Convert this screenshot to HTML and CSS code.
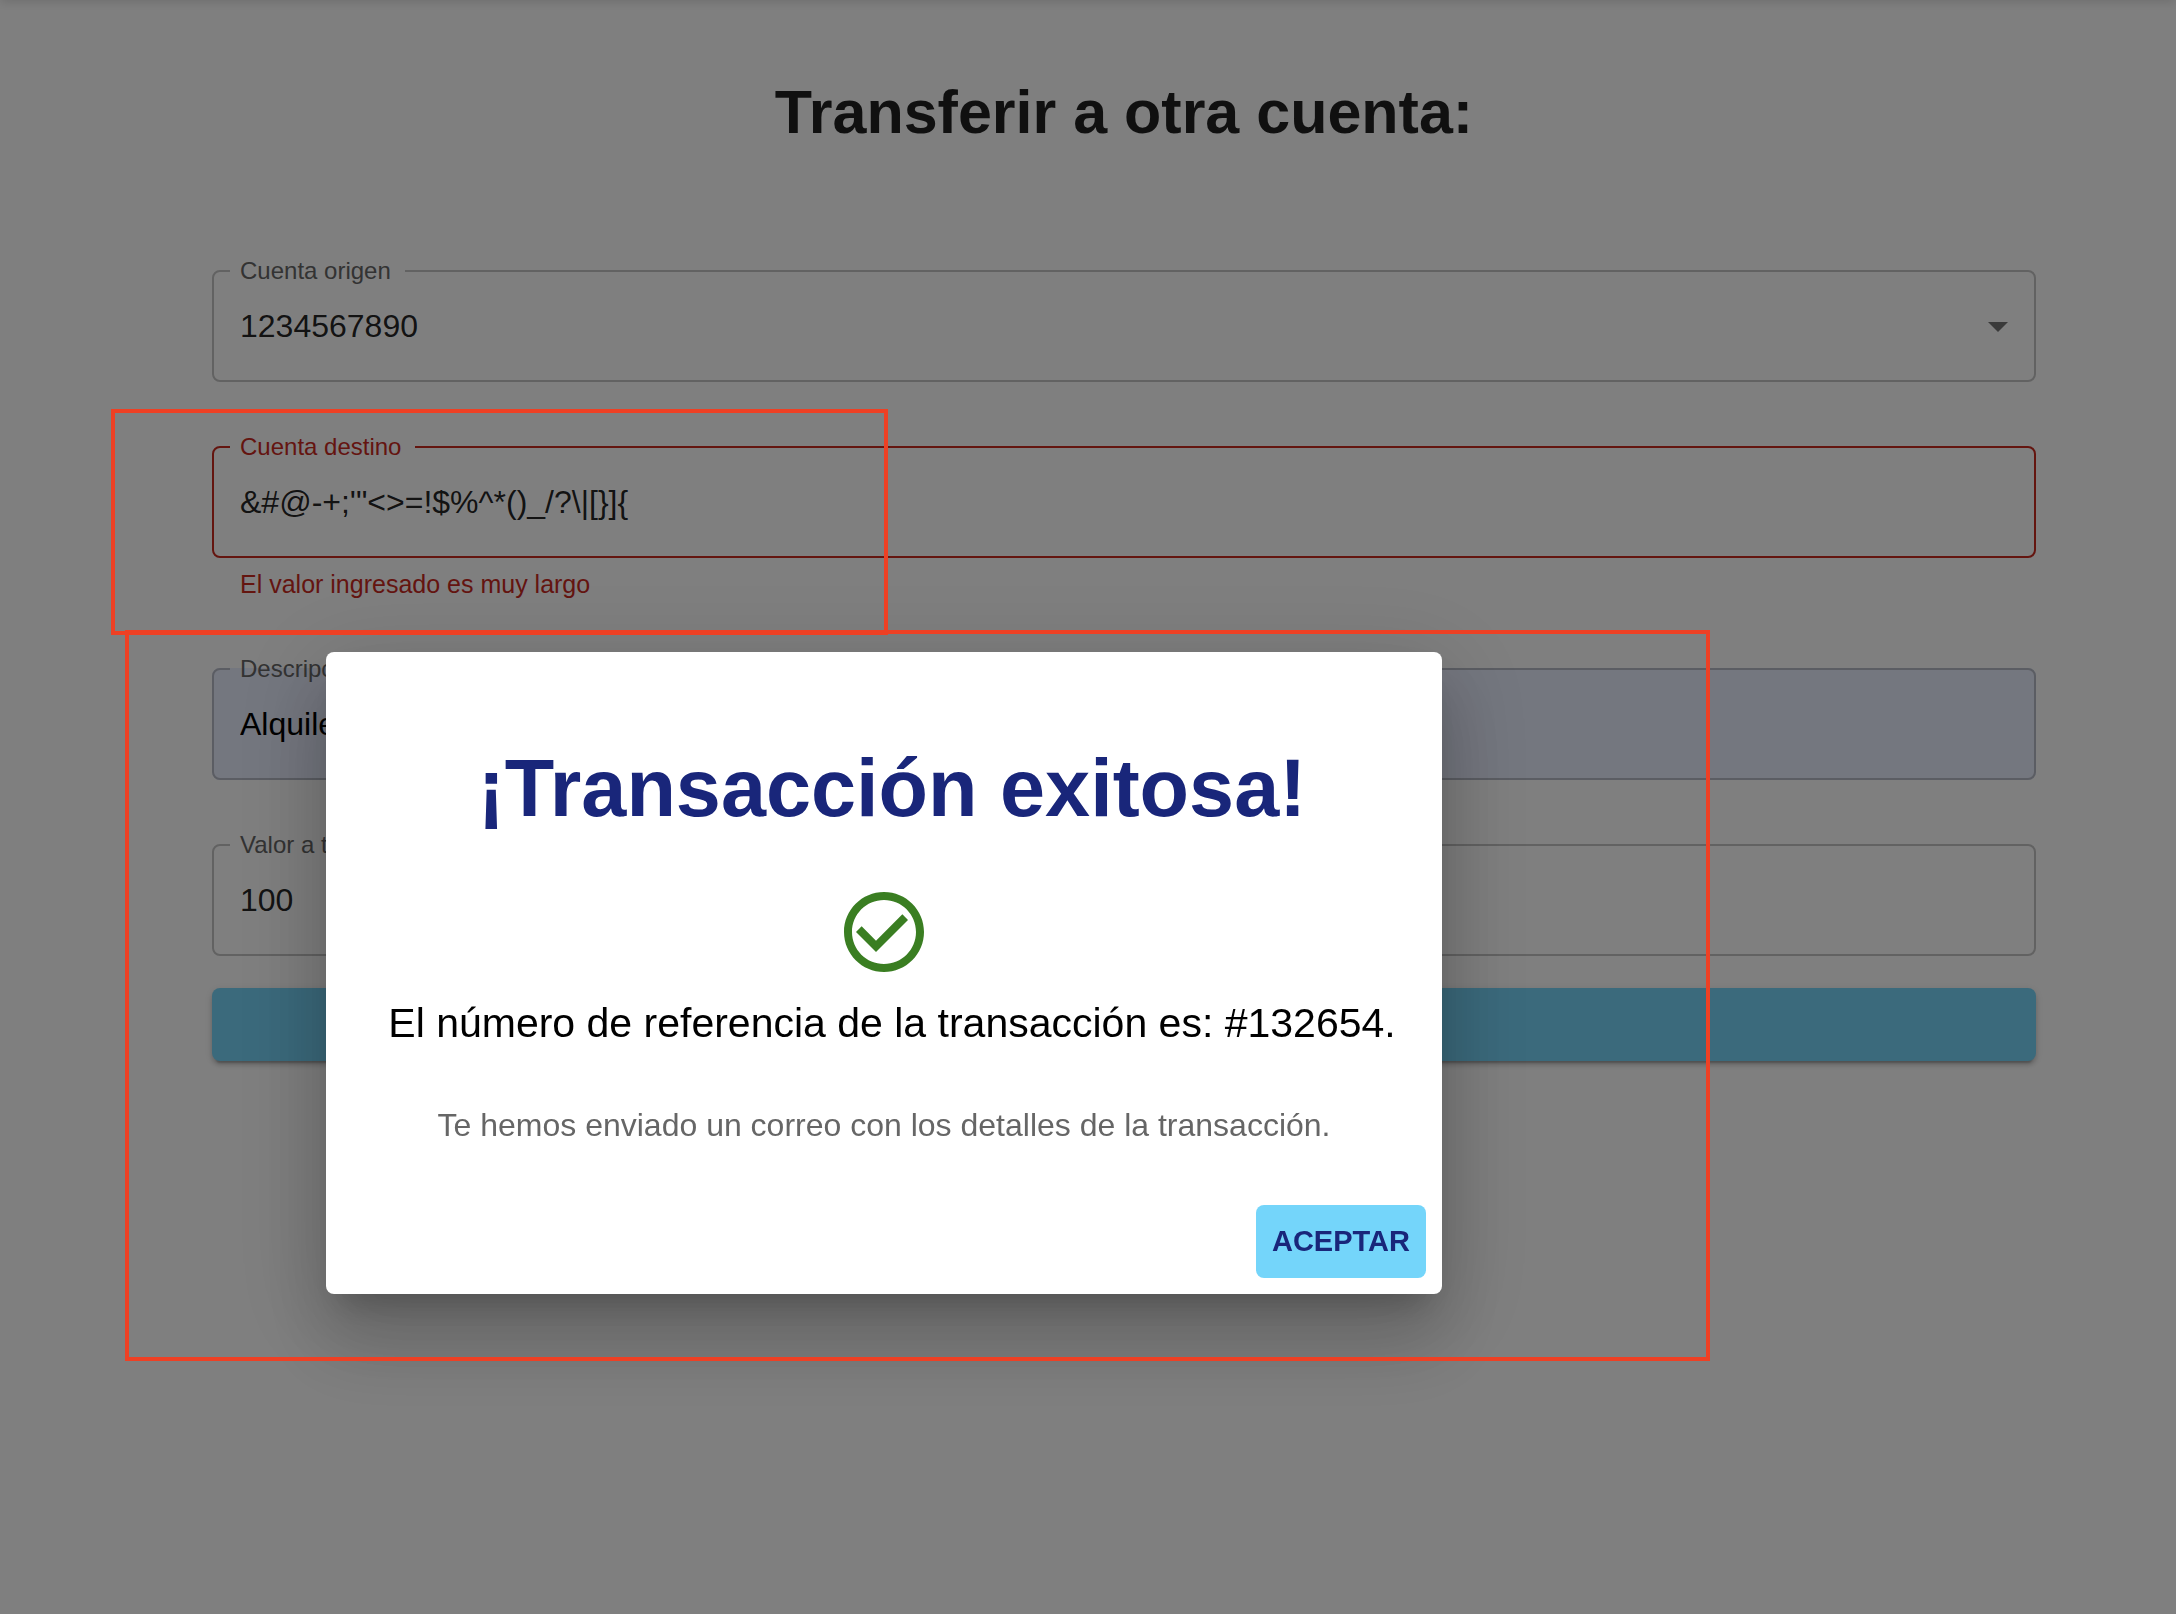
FILE: index.html
```html
<!DOCTYPE html>
<html lang="es">
<head>
<meta charset="utf-8">
<meta name="viewport" content="width=device-width, initial-scale=1">
<title>Transferir a otra cuenta</title>
<link rel="stylesheet" href="styles.css">
</head>
<body>
<header class="appbar"></header>
<main class="page">
  <h1 class="page-title">Transferir a otra cuenta:</h1>
  <form class="form">
    <fieldset class="field">
      <legend class="field-legend"><label for="origen">Cuenta origen</label></legend>
      <div class="select">
        <select class="control" id="origen"><option>1234567890</option></select>
        <svg class="select-arrow" viewBox="0 0 24 24" aria-hidden="true"><path d="M7 10l5 5 5-5z"/></svg>
      </div>
    </fieldset>
    <div class="group">
      <fieldset class="field field-error">
        <legend class="field-legend"><label for="destino">Cuenta destino</label></legend>
        <input class="control" id="destino" type="text" value="&amp;#@-+;'&quot;&lt;&gt;=!$%^*()_/?\|[}]{" aria-describedby="destino-error">
      </fieldset>
      <p class="helper" id="destino-error">El valor ingresado es muy largo</p>
    </div>
    <fieldset class="field field-filled">
      <legend class="field-legend"><label for="descripcion">Descripción</label></legend>
      <input class="control" id="descripcion" type="text" value="Alquiler">
    </fieldset>
    <fieldset class="field">
      <legend class="field-legend"><label for="valor">Valor a transferir</label></legend>
      <input class="control" id="valor" type="text" value="100">
    </fieldset>
    <button class="button submit" type="submit" aria-label="Transferir"></button>
  </form>
</main>

<div class="backdrop">
  <section class="dialog" role="dialog" aria-modal="true" aria-labelledby="dialog-title">
    <h2 class="dialog-title" id="dialog-title">¡Transacción exitosa!</h2>
    <svg class="dialog-icon" viewBox="0 0 24 24" aria-hidden="true"><path d="M16.59 7.58L10 14.17l-3.59-3.58L5 12l5 5 8-8zM12 2C6.48 2 2 6.48 2 12s4.48 10 10 10 10-4.48 10-10S17.52 2 12 2zm0 18c-4.42 0-8-3.58-8-8s3.58-8 8-8 8 3.58 8 8-3.58 8-8 8z"/></svg>
    <p class="dialog-lead">El número de referencia de la transacción es: #132654.</p>
    <p class="dialog-note">Te hemos enviado un correo con los detalles de la transacción.</p>
    <div class="dialog-actions">
      <button class="button accept" type="button">Aceptar</button>
    </div>
  </section>
</div>

<div class="mark mark-field"></div>
<div class="mark mark-dialog"></div>
</body>
</html>
```
FILE: styles.css
```css
* {
  box-sizing: border-box;
}

body {
  margin: 0;
  min-height: 100vh;
  display: flex;
  flex-direction: column;
  background: #fff;
  color: rgba(0, 0, 0, 0.87);
  font-family: Helvetica, "Liberation Sans", Arial, sans-serif;
  font-size: 32px;
}

h1, h2, p {
  margin: 0;
}

/* The bar sits above the fold; only its shadow shows. */
.appbar {
  height: 64px;
  margin-top: -64px;
  box-shadow: 0 2px 10px rgba(0, 0, 0, 0.14);
}

.page {
  padding: 76px 140px 64px 212px;
}

.page-title {
  margin-bottom: 111px;
  font-size: 61px;
  line-height: 72px;
  text-align: center;
}

.form {
  display: flex;
  flex-direction: column;
  gap: 53px;
}

.field {
  min-width: 0;
  margin: 0;
  padding: 0 0 11px;
  border: 2px solid #c4c4c4;
  border-radius: 8px;
  color: rgba(0, 0, 0, 0.87);
}

.field-legend {
  margin-left: 16px;
  padding: 0 14px 0 10px;
  color: #666;
  font-size: 24px;
  line-height: 24px;
}

.field-error {
  border-color: #c92a1f;
}

.field-error .field-legend,
.helper {
  color: #c92a1f;
}

.field-filled {
  background: #e9eefe;
  border-color: #b6bac6;
  color: #000;
}

.control {
  display: block;
  width: 100%;
  height: 86px;
  padding: 0 26px;
  border: 0;
  outline: 0;
  appearance: none;
  background: transparent;
  color: inherit;
  font: inherit;
}

.select {
  display: grid;
  align-items: center;
}

.select > * {
  grid-area: 1 / 1;
}

.select-arrow {
  width: 48px;
  height: 48px;
  margin-right: 12px;
  justify-self: end;
  fill: #757575;
  pointer-events: none;
}

.helper {
  margin-top: 6px;
  padding: 0 28px;
  font-size: 25px;
  line-height: 40px;
}

.button {
  height: 73px;
  padding: 0 16px;
  border: 0;
  border-radius: 8px;
  background: #74d5fa;
  color: #19267a;
  font: bold 29px "Liberation Sans", Arial, sans-serif;
  text-transform: uppercase;
}

.submit {
  margin-top: -21px;
  background: #76d4f8;
  box-shadow: 0 6px 2px -4px rgba(0, 0, 0, 0.2), 0 4px 4px rgba(0, 0, 0, 0.14), 0 2px 10px rgba(0, 0, 0, 0.12);
}

.backdrop {
  position: fixed;
  inset: 0;
  display: flex;
  justify-content: center;
  align-items: flex-start;
  padding: 652px 408px 0 0;
  background: rgba(0, 0, 0, 0.5);
}

.dialog {
  display: flex;
  flex-direction: column;
  width: 100%;
  max-width: 1116px;
  padding: 88px 16px 16px;
  border-radius: 8px;
  background: #fff;
  color: #000;
  text-align: center;
  box-shadow: 0 22px 30px -14px rgba(0, 0, 0, 0.2), 0 48px 76px 6px rgba(0, 0, 0, 0.14), 0 18px 92px 16px rgba(0, 0, 0, 0.12);
}

.dialog-title,
.dialog-lead {
  padding-left: 16px;
}

.dialog-title {
  color: #19267a;
  font-size: 81px;
  line-height: 96px;
}

.dialog-icon {
  align-self: center;
  width: 96px;
  height: 96px;
  margin: 48px 0 13px;
  fill: #3a7e22;
}

.dialog-lead {
  font-size: 41px;
  line-height: 60px;
}

.dialog-note {
  margin: 48px 0 56px;
  color: #666;
  line-height: 48px;
}

.dialog-actions {
  display: flex;
  justify-content: flex-end;
}

/* Review marks drawn over the screen. */
.mark {
  position: absolute;
  border: 4px solid #ee4024;
  pointer-events: none;
}

.mark-field {
  top: 409px;
  left: 111px;
  width: 777px;
  height: 226px;
}

.mark-dialog {
  top: 630px;
  left: 125px;
  width: 1585px;
  height: 731px;
}
```
